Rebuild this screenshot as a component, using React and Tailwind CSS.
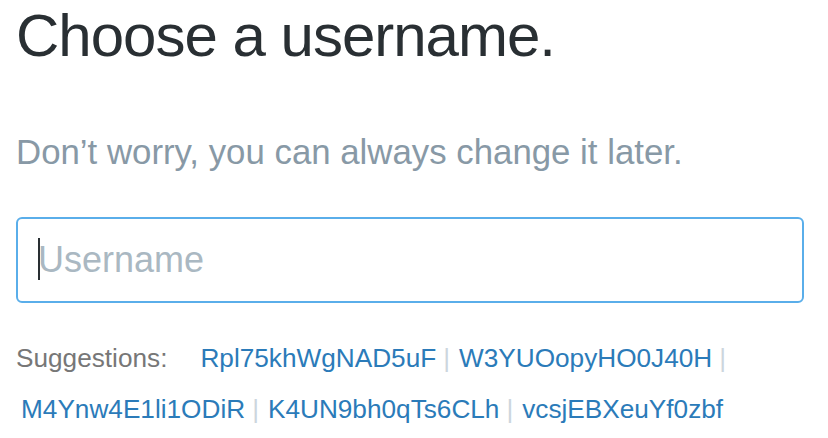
const suggestions = [
  "Rpl75khWgNAD5uF",
  "W3YUOopyHO0J40H",
  "M4Ynw4E1li1ODiR",
  "K4UN9bh0qTs6CLh",
  "vcsjEBXeuYf0zbf",
];

const font = { fontFamily: '"Liberation Sans", Arial, sans-serif' };

export default function App() {
  return (
    <div className="w-[828px] h-[438px] bg-white pt-[6px] pl-4 pr-6" style={font}>
      {/* Heading */}
      <h1 className="text-[60px] leading-[60px] tracking-[-1px] text-[#292f33] font-normal">
        Choose a username.
      </h1>

      <p className="mt-[66px] text-[34.8px] leading-[40px] text-[#8899a6]">
        Don’t worry, you can always change it later.
      </p>

      {/* Username field */}
      <div className="relative mt-[45px]">
        <input
          type="text"
          placeholder="Username"
          className="w-full h-[86px] border-2 border-[#5aaeea] rounded-[6px] pl-5 pr-4 text-[36px] text-[#292f33] placeholder:text-[#aab8c2] outline-none"
          style={font}
        />
        <span className="absolute left-[22px] top-[21px] w-[2px] h-[42px] bg-[#292f33]"></span>
      </div>

      {/* Suggestions */}
      <div className="mt-[30px] flex flex-wrap items-start text-[26.2px] leading-[51px]">
        <span className="text-[#777] mr-[28px]">Suggestions:</span>
        {suggestions.map((name, index) => (
          <span key={name} className="flex pl-[5px]">
            <a href="#" className="text-[#2b7bb9]">{name}</a>
            {index < suggestions.length - 1 && (
              <span className="text-[#ccd6dd] ml-[7px] mr-[4px]">|</span>
            )}
          </span>
        ))}
      </div>
    </div>
  );
}
